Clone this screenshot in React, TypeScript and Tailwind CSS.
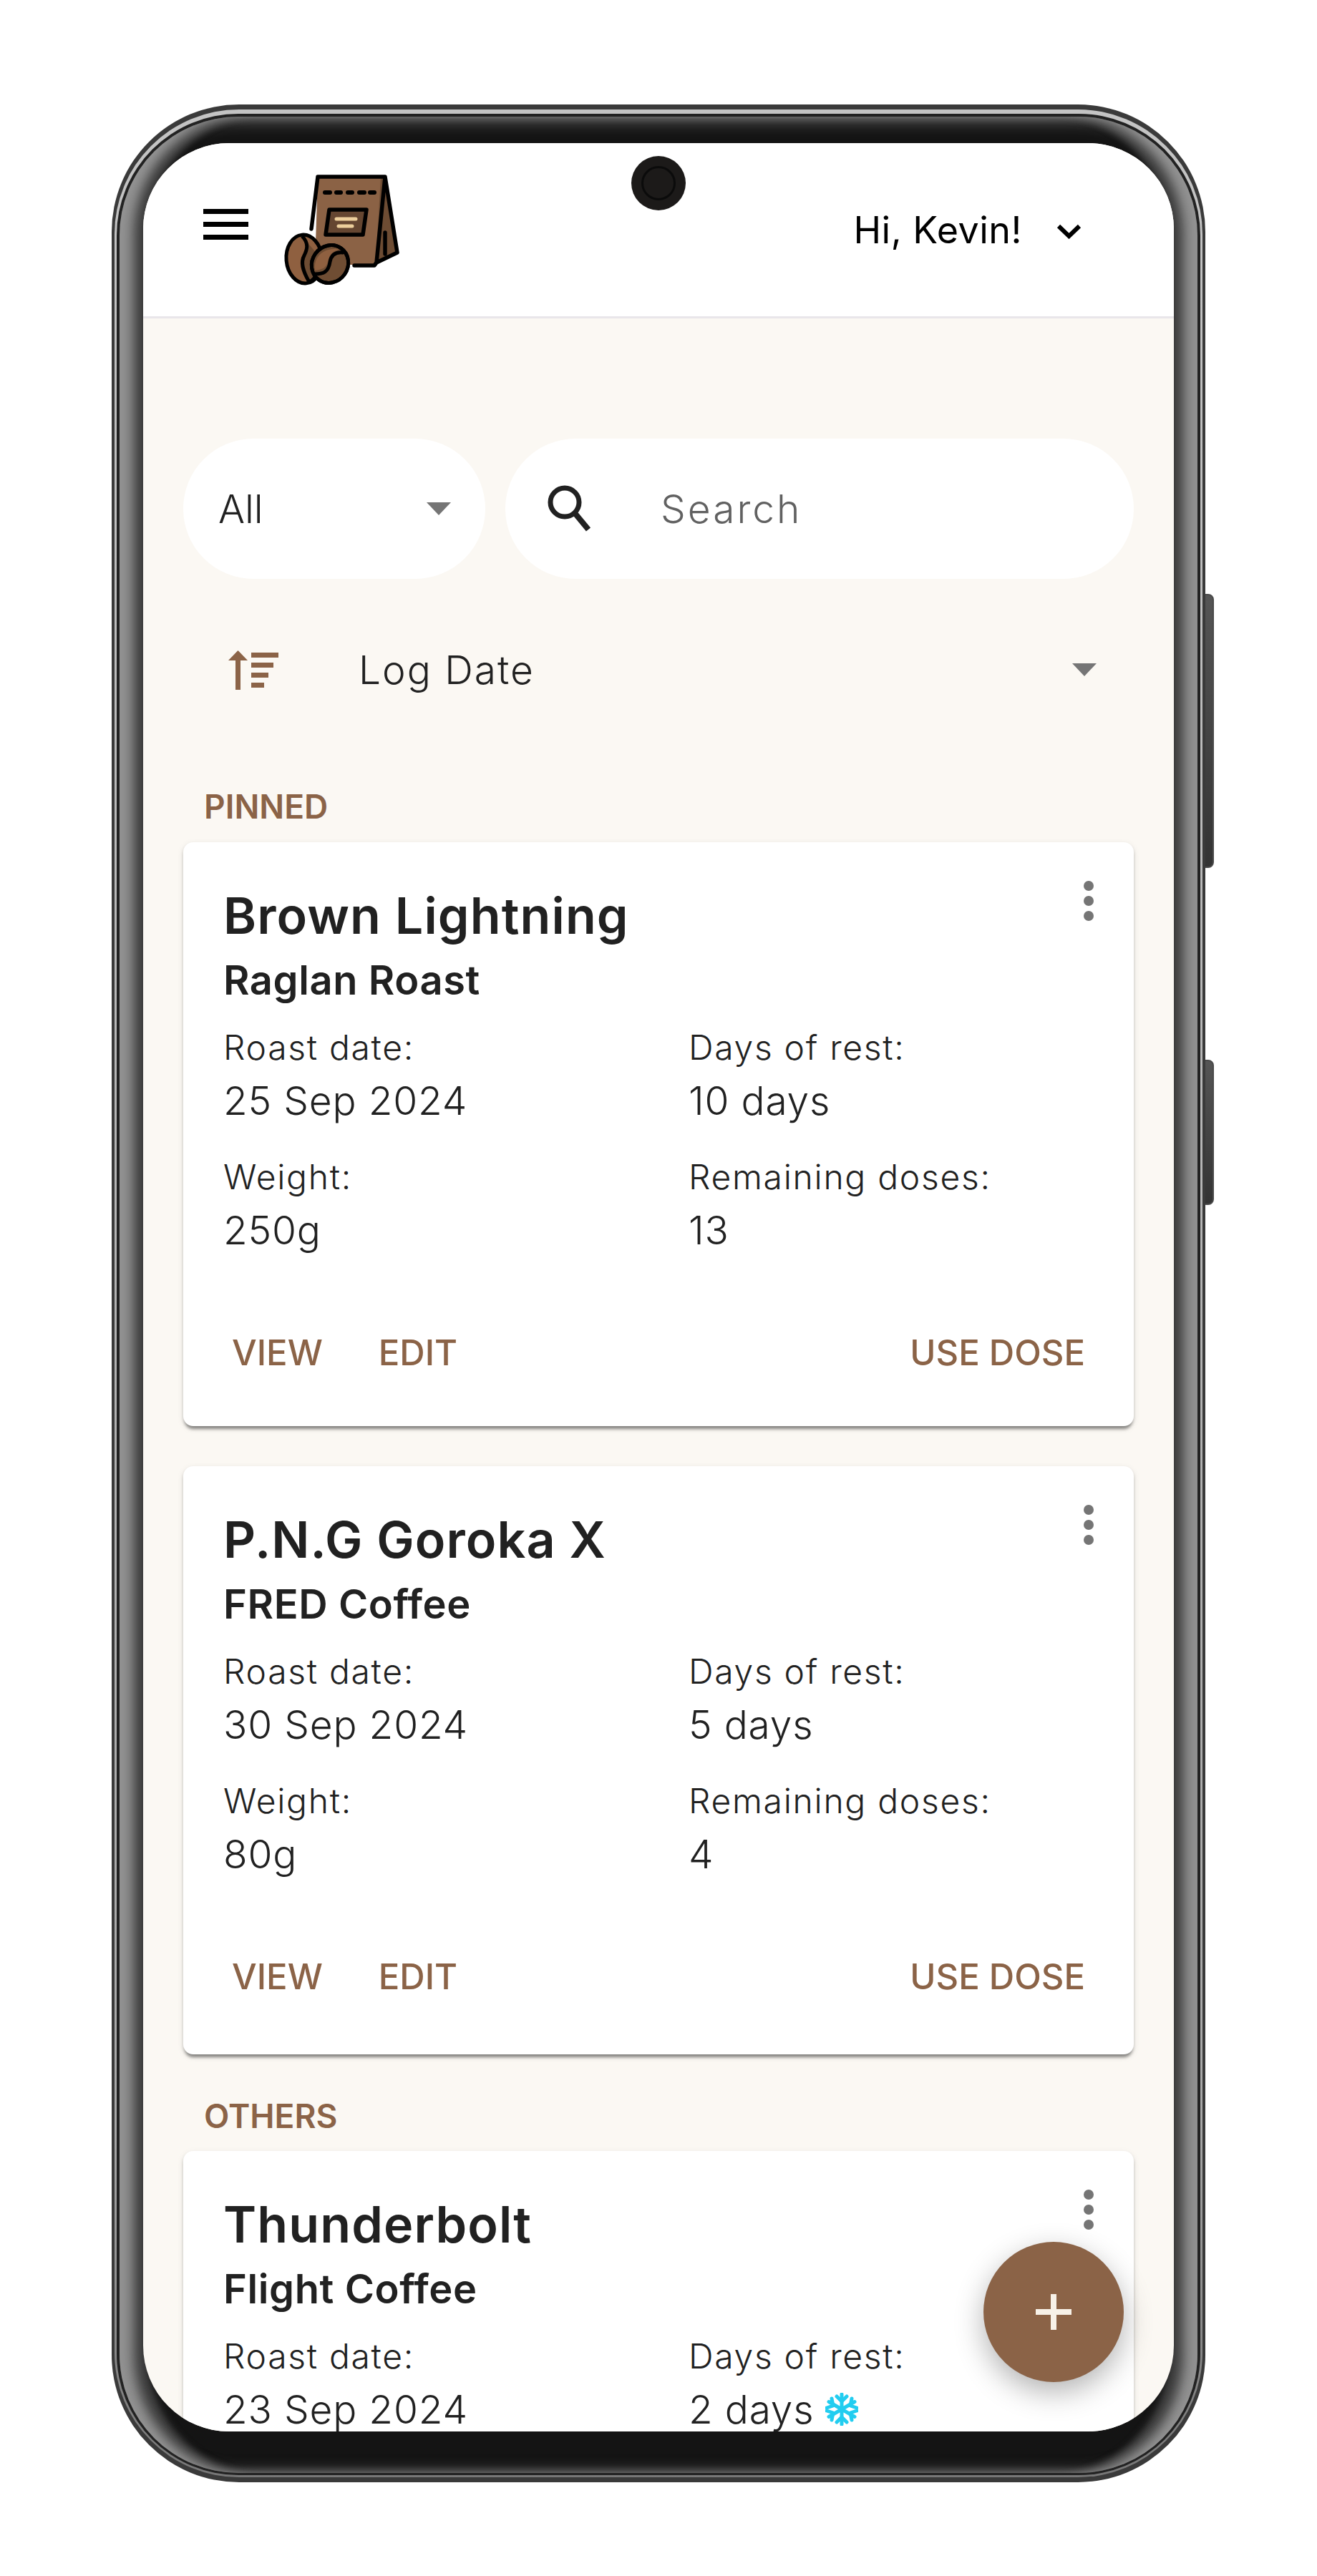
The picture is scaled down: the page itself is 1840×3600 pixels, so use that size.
const brown = "#8b6347";

function Logo() {
  return (
    <svg viewBox="0 0 200 200" className="h-[200px] w-[200px] shrink-0">
      <path d="M64 27H158L175 135L145 150H60Z" fill="#8b6245" />
      <path d="M152 27h6l17 108-30 15Z" fill="#6d4c33" />
      <path d="M64 27H158L175 133L146 147M146 147l-3 4H115M158 27L146 147M55 100L64 27M158 105V135" fill="none" stroke="#000" strokeWidth="5.5" strokeLinecap="round" strokeLinejoin="round" />
      <path d="M74 49h7M90 49h6M106 49h6M122 49h7M137 49h6" stroke="#000" strokeWidth="6" strokeLinecap="round" />
      <path d="M80 73H132L127 108H75Z" fill="#654631" stroke="#000" strokeWidth="5.5" strokeLinejoin="round" />
      <path d="M90 86H117M93 96H112" stroke="#edcf9c" strokeWidth="5" strokeLinecap="round" />
      <ellipse cx="45" cy="142" rx="25" ry="34" fill="#8f6040" stroke="#000" strokeWidth="5" transform="rotate(-5 45 142)" />
      <path d="M42 110c10 10 7 19 3 27c-5 9-3 20 7 37c10-4 15-20 17-32" fill="#6d4c33" stroke="#000" strokeWidth="5" strokeLinejoin="round" />
      <ellipse cx="81" cy="149" rx="25" ry="27" fill="#6f4d33" stroke="#000" strokeWidth="5" transform="rotate(35 81 149)" />
      <path d="M60 158c-2-20 12-32 34-30c-8 3-14 7-16 18c-2 8-8 11-18 12Z" fill="#8f6040" />
      <path d="M60 163c12 0 19-3 21-17c2-11 9-14 18-13" fill="none" stroke="#000" strokeWidth="5" strokeLinecap="round" />
      <ellipse cx="81" cy="149" rx="25" ry="27" fill="none" stroke="#000" strokeWidth="5" transform="rotate(35 81 149)" />
    </svg>
  );
}

function Caret() {
  return <div className="h-0 w-0 border-x-[17px] border-t-[18px] border-x-transparent border-t-[#757575]" />;
}

function Flake() {
  return (
    <svg viewBox="0 0 46 46" className="ml-[16px] h-[46px] w-[46px] shrink-0" fill="none" stroke="#22cdf0" strokeWidth="5" strokeLinecap="round" strokeLinejoin="round">
      <path d="M23 2V44M5 12.5L41 33.5M41 12.5L5 33.5" />
      <path d="M16 5L23 12L30 5M16 41L23 34L30 41M2 21L11 18L9 8M44 21L35 18L37 8M2 25L11 28L9 38M44 25L35 28L37 38" />
    </svg>
  );
}

function Field({ label, value, flake }: { label: string; value: string; flake?: boolean }) {
  return (
    <div>
      <div className="text-[48px] font-light leading-[74px] tracking-[1.7px] text-[#212121]">{label}</div>
      <div className="flex items-center text-[55px] font-light leading-[74px] tracking-[0.8px] text-[#212121]">
        {value}
        {flake && <Flake />}
      </div>
    </div>
  );
}

function Card({ name, roaster, date, rest, weight, doses, flake, tall }: { name: string; roaster: string; date: string; rest: string; weight: string; doses: string; flake?: boolean; tall?: boolean }) {
  return (
    <div className={`relative mb-[56px] rounded-[14px] bg-white px-[56px] pt-[40px] shadow-[0_7px_4px_-3px_rgba(0,0,0,0.35),0_3px_4px_rgba(0,0,0,0.14),0_3px_10px_rgba(0,0,0,0.1)] ${tall ? "pb-[58px]" : "pb-[52px]"}`}>
      <svg viewBox="0 0 14 56" className="absolute top-[54px] right-[56px] h-[56px] w-[14px]">
        <circle cx="7" cy="7" r="7" fill="#757575" />
        <circle cx="7" cy="28" r="7" fill="#757575" />
        <circle cx="7" cy="49" r="7" fill="#757575" />
      </svg>
      <div className="text-[70px] font-semibold leading-[126px] tracking-[1.1px] text-[#212121]">{name}</div>
      <div className="text-[56px] font-semibold leading-[54px] tracking-[0.6px] text-[#212121]">{roaster}</div>
      <div className="mt-[30px] grid grid-cols-[650px_1fr] gap-y-[33px]">
        <Field label="Roast date:" value={date} />
        <Field label="Days of rest:" value={rest} flake={flake} />
        <Field label="Weight:" value={weight} />
        <Field label="Remaining doses:" value={doses} />
      </div>
      <div className="mt-[85px] flex items-center justify-between px-[12px] text-[49px] font-medium leading-[100px] text-[#8b6347]">
        <div className="flex gap-[78px]">
          <span>VIEW</span>
          <span>EDIT</span>
        </div>
        <span>USE DOSE</span>
      </div>
    </div>
  );
}

export default function App() {
  return (
    <div className="relative h-[3600px] w-[1840px] overflow-hidden bg-white pt-[146px] pl-[156px] font-['Inter',sans-serif]">
      {/* side keys */}
      <div className="absolute top-[830px] left-[1680px] h-[383px] w-[16px] rounded-r-[8px] border-2 border-[#4a4a4a] bg-[linear-gradient(180deg,#555,#333)]" />
      <div className="absolute top-[1481px] left-[1680px] h-[203px] w-[16px] rounded-r-[8px] border-2 border-[#4a4a4a] bg-[linear-gradient(180deg,#555,#333)]" />

      <div className="relative h-[3323px] w-[1528px] rounded-[178px] bg-[#3a3a3a] px-[4px] py-[7px]">
        <div className="h-full rounded-[174px] bg-[linear-gradient(180deg,#c4c4c4,#a8a8a8_85%,#777)] px-[3px] pt-[6px] pb-[3px]">
          <div className="h-full rounded-[170px] bg-[#222] px-[4px] pt-[4px] pb-[3px]">
            <div className="h-full rounded-[166px] bg-[#141414] px-[33px] pt-[37px] pb-[58px] shadow-[inset_26px_0_16px_-6px_rgba(195,195,195,0.62),inset_-26px_0_16px_-6px_rgba(195,195,195,0.62),inset_46px_0_10px_-6px_rgba(70,70,70,0.8),inset_-46px_0_10px_-6px_rgba(70,70,70,0.8),inset_0_14px_22px_-8px_rgba(170,170,170,0.55),inset_0_-12px_18px_-8px_rgba(150,150,150,0.5)]">
              {/* screen */}
              <div className="relative h-[3198px] overflow-hidden rounded-[120px] bg-[#fbf8f3]">
                <header className="flex h-[245px] items-start border-b-[3px] border-[#e9e6ea] bg-white">
                  <div className="mt-[92px] ml-[84px] flex w-[63px] flex-col gap-[11px]">
                    <div className="h-[7px] bg-black" />
                    <div className="h-[7px] bg-black" />
                    <div className="h-[7px] bg-black" />
                  </div>
                  <div className="mt-[20px] ml-[33px]">
                    <Logo />
                  </div>
                  <div className="mt-[87px] ml-auto flex items-center pr-[129px]">
                    <span className="text-[52px] leading-[70px] tracking-[0.5px] text-black">Hi, Kevin!</span>
                    <svg viewBox="0 0 35 21" className="mt-[3px] ml-[48px] h-[21px] w-[35px]">
                      <path d="M3 3L17.5 17L32 3" fill="none" stroke="#000" strokeWidth="6" />
                    </svg>
                  </div>
                </header>

                <main className="px-[56px] pt-[168px]">
                  <div className="flex gap-[28px]">
                    <div className="flex h-[196px] w-[422px] items-center justify-between rounded-full bg-white pr-[48px] pl-[49px]">
                      <span className="text-[55px] font-light text-[#212121]">All</span>
                      <Caret />
                    </div>
                    <div className="flex h-[196px] flex-1 items-center rounded-full bg-white pl-[58px]">
                      <svg viewBox="0 0 62 68" className="h-[68px] w-[62px]">
                        <circle cx="25" cy="25" r="20" fill="none" stroke="#212121" strokeWidth="7" />
                        <path d="M39 40L58 63" stroke="#212121" strokeWidth="8" />
                      </svg>
                      <span className="ml-[97px] text-[55px] font-light tracking-[3px] text-[#616161]">Search</span>
                    </div>
                  </div>

                  <div className="mt-[82px] flex items-center pr-[52px] pl-[63px]">
                    <svg viewBox="0 0 70 55" className="h-[55px] w-[70px]">
                      <path d="M13.5 0L27 14H17V55H10V14H0Z" fill="#8b6347" />
                      <path d="M32 3H70V10H32ZM32 17H63V24H32ZM32 31H56V38H32ZM32 45H50V52H32Z" fill="#8b6347" />
                    </svg>
                    <span className="ml-[112px] text-[55px] font-light leading-[90px] tracking-[2px] text-[#212121]">Log Date</span>
                    <div className="ml-auto">
                      <Caret />
                    </div>
                  </div>

                  <div className="mt-[116px] mb-[20px] pl-[29px] text-[46px] font-semibold leading-[60px] text-[#8b6347]">PINNED</div>
                  <Card name="Brown Lightning" roaster="Raglan Roast" date="25 Sep 2024" rest="10 days" weight="250g" doses="13" />
                  <Card name="P.N.G Goroka X" roaster="FRED Coffee" date="30 Sep 2024" rest="5 days" weight="80g" doses="4" tall />
                  <div className="mt-[32px] mb-[19px] pl-[29px] text-[46px] font-semibold leading-[60px] text-[#8b6347]">OTHERS</div>
                  <Card name="Thunderbolt" roaster="Flight Coffee" date="23 Sep 2024" rest="2 days" weight="250g" doses="8" flake />
                </main>

                <button className="absolute top-[2933px] left-[1174px] flex h-[196px] w-[196px] items-center justify-center rounded-full shadow-[0_14px_40px_rgba(0,0,0,0.3)]" style={{ background: brown }}>
                  <svg viewBox="0 0 50 50" className="h-[50px] w-[50px]">
                    <path d="M0 25H50M25 0V50" stroke="#f7f1e8" strokeWidth="8" />
                  </svg>
                </button>

                {/* punch-hole camera */}
                <div className="absolute top-[18px] left-[682px] flex h-[76px] w-[76px] items-center justify-center rounded-full bg-[#1c1a19]">
                  <div className="h-[48px] w-[48px] rounded-full border-[3px] border-[#0b0b0b] bg-[radial-gradient(circle_at_42%_30%,#7fb3c4_0,#2a4046_24%,transparent_42%),radial-gradient(circle_at_70%_70%,#2f4f4a_0,transparent_32%),#0d1415]" />
                </div>
              </div>
            </div>
          </div>
        </div>
      </div>
    </div>
  );
}
